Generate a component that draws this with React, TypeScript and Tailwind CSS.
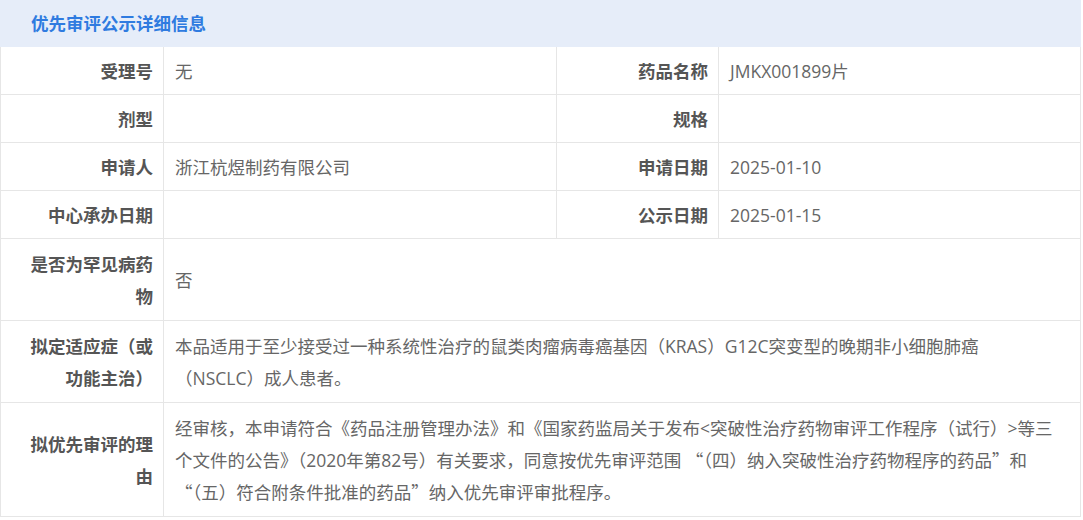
const font = "font-['Open_Sans','Noto_Sans_CJK_SC',sans-serif]";
const cjk = "font-['Noto_Sans_CJK_SC',sans-serif]";

type Cell = { label: string; value?: React.ReactNode; wide?: boolean };

const Q = ({ c }: { c: string }) => <span className={cjk}>{c}</span>;

const rows: Cell[][] = [
  [{ label: "受理号", value: "无" }, { label: "药品名称", value: "JMKX001899片" }],
  [{ label: "剂型" }, { label: "规格" }],
  [{ label: "申请人", value: "浙江杭煜制药有限公司" }, { label: "申请日期", value: "2025-01-10" }],
  [{ label: "中心承办日期" }, { label: "公示日期", value: "2025-01-15" }],
  [{ label: "是否为罕见病药物", value: "否", wide: true }],
  [
    {
      label: "拟定适应症（或功能主治）",
      value: (
        <>
          <span className="block">本品适用于至少接受过一种系统性治疗的鼠类肉瘤病毒癌基因（KRAS）G12C突变型的晚期非小细胞肺癌</span>
          <span className="block">（NSCLC）成人患者。</span>
        </>
      ),
      wide: true,
    },
  ],
  [
    {
      label: "拟优先审评的理由",
      value: (
        <>
          <span className="block">
            经审核，本申请符合《药品注册管理办法》和《国家药监局关于发布&lt;突破性治疗药物审评工作程序（试行）&gt;等三
          </span>
          <span className="block">
            个文件的公告》（2020年第82号）有关要求，同意按优先审评范围 <Q c="“" />（四）纳入突破性治疗药物程序的药品<Q c="”" />和
          </span>
          <span className="block">
            <Q c="“" />（五）符合附条件批准的药品<Q c="”" />纳入优先审评审批程序。
          </span>
        </>
      ),
      wide: true,
    },
  ],
];

function Label({ text, tall }: { text: string; tall?: boolean }) {
  return (
    <div
      className={
        "flex items-center justify-end border-r border-b border-[#e6e6e6] pl-[24px] pr-[10px] text-right font-bold text-[#555] leading-[32px] " +
        (tall ? "py-[8.5px]" : "py-[7.5px]")
      }
    >
      {text}
    </div>
  );
}

function Value({ text, wide }: { text?: React.ReactNode; wide?: boolean }) {
  return (
    <div
      className={
        "flex items-center border-r border-b border-[#e6e6e6] pl-[11px] pr-[8px] text-[#666] leading-[32px] " +
        (wide ? "col-span-3 py-[8.5px]" : "py-[7.5px]")
      }
    >
      <div className="whitespace-nowrap">{text}</div>
    </div>
  );
}

export default function App() {
  return (
    <div className={"min-h-screen bg-white text-[17.5px] " + font}>
      <div className="w-[1081px]">
        <div className="flex h-[47px] items-center bg-[#e6edf9] pl-[31px] font-bold text-[#2f7be0]">
          优先审评公示详细信息
        </div>
        <div className="grid grid-cols-[163px_393px_162px_362px] border-l border-[#e6e6e6]">
          {rows.map((row, i) =>
            row.map((c, j) => [
              <Label key={`l${i}-${j}`} text={c.label} tall={c.wide} />,
              <Value key={`v${i}-${j}`} text={c.value} wide={c.wide} />,
            ])
          )}
        </div>
      </div>
    </div>
  );
}
